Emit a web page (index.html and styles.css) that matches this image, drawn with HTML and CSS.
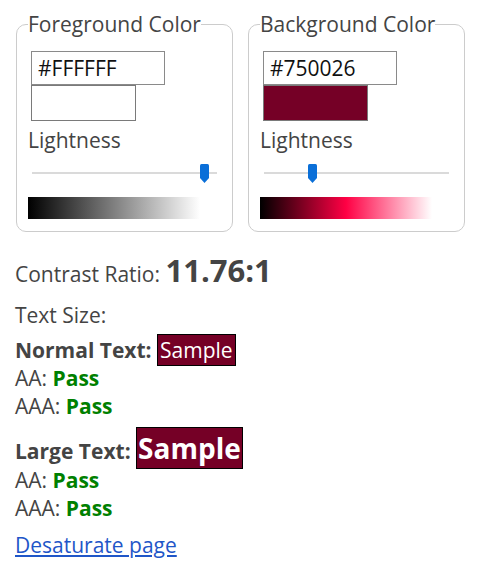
FILE: index.html
```html
<!DOCTYPE html>
<html>
<head>
<meta charset="utf-8">
<link rel="stylesheet" href="styles.css">
</head>
<body>
<div class="pickers">
  <fieldset class="picker">
    <legend>Foreground Color</legend>
    <input class="hex" type="text" value="#FFFFFF">
    <div class="swatch swatch-fg"></div>
    <div class="label">Lightness</div>
    <div class="slider">
      <div class="track"></div>
      <svg class="thumb" style="left:168px" width="9" height="19" viewBox="0 0 9 19"><path d="M0 1.5 Q0 0 1.5 0 H7.5 Q9 0 9 1.5 V14 L4.5 19 L0 14 Z" fill="#0a6fd8"/></svg>
    </div>
    <div class="grad grad-fg"></div>
  </fieldset>
  <fieldset class="picker">
    <legend>Background Color</legend>
    <input class="hex" type="text" value="#750026">
    <div class="swatch swatch-bg"></div>
    <div class="label">Lightness</div>
    <div class="slider">
      <div class="track"></div>
      <svg class="thumb" style="left:44px" width="9" height="19" viewBox="0 0 9 19"><path d="M0 1.5 Q0 0 1.5 0 H7.5 Q9 0 9 1.5 V14 L4.5 19 L0 14 Z" fill="#0a6fd8"/></svg>
    </div>
    <div class="grad grad-bg"></div>
  </fieldset>
</div>
<div class="results">
  <div class="ratio">Contrast Ratio: <b class="ratio-num">11.76:1</b></div>
  <div class="size">Text Size:</div>
  <div class="group">
    <div class="row"><b>Normal Text:</b> <span class="sample sample-normal">Sample</span></div>
    <div class="row">AA: <b class="pass">Pass</b></div>
    <div class="row">AAA: <b class="pass">Pass</b></div>
  </div>
  <div class="group group-large">
    <div class="row row-large"><b>Large Text:</b> <span class="sample sample-large">Sample</span></div>
    <div class="row">AA: <b class="pass">Pass</b></div>
    <div class="row">AAA: <b class="pass">Pass</b></div>
  </div>
  <div class="link-row"><a class="link" href="#">Desaturate page</a></div>
</div>
</body>
</html>
```
FILE: styles.css
```css
html, body {
  margin: 0;
  padding: 0;
  background: #fff;
}
body {
  font-family: "Open Sans", "Noto Sans", sans-serif;
  font-size: 21px;
  color: #444;
}
.pickers {
  display: flex;
  gap: 15px;
  padding: 10px 0 0 16px;
}
.picker {
  margin: 0;
  width: 217px;
  box-sizing: border-box;
  border: 1px solid #ccc;
  border-radius: 10px;
  padding: 0 11px 12px 11px;
  min-width: 0;
}
.picker legend {
  padding: 0;
  font-size: 21px;
  line-height: 28px;
}
.hex {
  display: block;
  margin: 13px 0 0 3px;
  width: 134px;
  height: 34px;
  box-sizing: border-box;
  border: 1px solid #8a8a8a;
  padding: 0 6px;
  font-family: "Open Sans", sans-serif;
  font-size: 21px;
  color: #111;
  outline: none;
}
.swatch {
  margin-left: 3px;
  width: 105px;
  height: 36px;
  box-sizing: border-box;
  border: 1px solid #7a7a7a;
}
.swatch-fg { background: #fff; }
.swatch-bg { background: #750026; }
.label {
  margin-top: 6px;
  line-height: 27px;
}
.slider {
  position: relative;
  margin: 10px 0 0 4px;
  width: 185px;
  height: 19px;
}
.track {
  position: absolute;
  left: 0;
  right: 0;
  top: 8px;
  height: 2px;
  background: #dadada;
}
.thumb {
  position: absolute;
  top: 0;
  display: block;
}
.grad {
  margin-top: 14px;
  width: 172px;
  height: 22px;
}
.grad-fg { background: linear-gradient(to right, #000, #fff); }
.grad-bg { background: linear-gradient(to right, #000, #ff0044 50%, #fff); }
.results {
  padding-left: 15px;
}
.ratio {
  margin-top: 24px;
  line-height: 28px;
}
.ratio-num {
  font-size: 31px;
  font-weight: 700;
  line-height: 28px;
}
.size {
  margin-top: 13px;
  line-height: 28px;
}
.group {
  margin-top: 7px;
}
.row {
  line-height: 28px;
}
b { font-weight: 700; }
.pass { color: #008000; }
.sample {
  background: #750026;
  color: #fff;
  border: 1px solid #000;
  line-height: 0;
  padding: 1px 2px;
}
.sample-large {
  font-size: 28px;
  font-weight: 700;
  padding: 1px 1px;
}
.group-large {
  margin-top: 17px;
}
.row-large {
  line-height: 29px;
}
.link-row {
  margin-top: 9px;
  line-height: 28px;
}
.link {
  color: #1f56c8;
  text-decoration: underline;
}
```
